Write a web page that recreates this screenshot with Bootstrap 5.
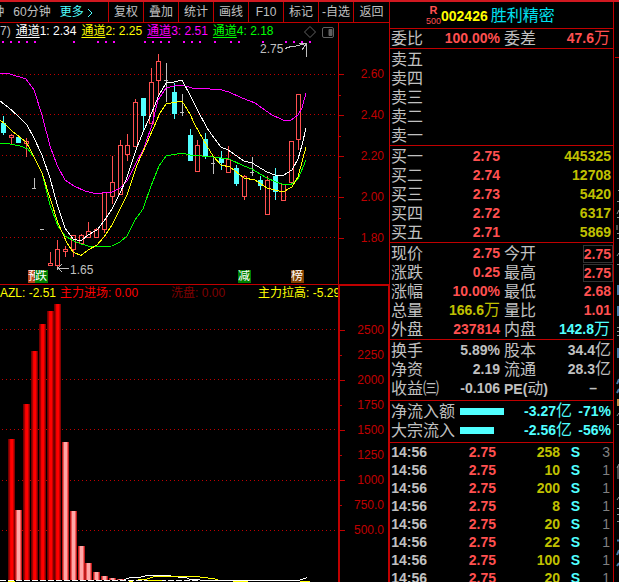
<!DOCTYPE html>
<html lang="zh-CN">
<head>
<meta charset="utf-8">
<meta name="viewport" content="width=device-width, initial-scale=1">
<title>002426 胜利精密</title>
<link href="https://cdn.jsdelivr.net/npm/bootstrap@5.3.0/dist/css/bootstrap.min.css" rel="stylesheet">
<style>
:root{--line:#c00000;--up:#ff5050;--dn:#50ffff;--tx:#c0c0c0;--vol:#c0c000}
body{background:#000;color:var(--tx);font:12px/16px "Liberation Sans","Noto Sans CJK SC",sans-serif}
.app{border-top:2px solid #d01820}
.toolbar{height:21px;border-bottom:1px solid var(--line)}
.toolbar button{background:none;border:0;padding:0;color:var(--tx);font-size:12px;line-height:16px;white-space:nowrap;flex:none}
.toolbar .periods{gap:9px;padding-right:14px}
.toolbar .tool{width:35px;border-left:1px solid var(--line)}
.toolbar .tool:last-child{width:36px}
.toolbar .more{color:var(--dn)}
.upper{height:261px}
.legend-row{height:17px;line-height:17px;white-space:nowrap;overflow:hidden}
.legend-row span{flex:none}
.legend-row u{text-underline-offset:2px}
.white{color:#fff}.yellow{color:#ff0}.magenta{color:#f0f}.green{color:#0f0}
.red{color:#f00}.maroon{color:#800000}.up{color:var(--up)}.dn{color:var(--dn)}.vol{color:var(--vol)}
.gap5{gap:5px}
.spaced{margin-left:33px}
.axis{width:51px;color:var(--line);border-left:1px solid var(--line);padding:41px 5px 0 0;margin:0;list-style:none}
.axis li{height:21px;line-height:21px;display:flex;justify-content:space-between;align-items:center}
.axis li::before{content:"";width:5px;height:1px;background:var(--line)}
.axis li.minor{height:20px}
.axis li.minor::before{width:2px}
.lower{border-top:1px solid var(--line)}
.lower .axis{border:2px solid var(--line);border-bottom:0;border-right-width:1px;margin-top:-1px;padding:32px 4px 0 0}
.lower .axis li{height:25px;line-height:25px}
.plot{min-width:0}
.flag{position:absolute;top:247px;width:13px;height:13px;line-height:13px;color:#fff;overflow:hidden;background:#008000}
.flag.brown{background:#804000}
.flag.part{width:7px;background:#b84818}
.note{position:absolute;line-height:14px}
.quote{width:225px;border-left:1px solid var(--line);border-right:1px solid var(--line);flex:none}
.stock{height:27px;padding:2px 0 0 36px;border-bottom:1px solid var(--line)}
.stock .tag{width:15px;line-height:11px;font-size:9px;color:var(--up)}
.stock .tag b{font-size:11px}
.stock .code{font-size:14px;font-weight:bold;margin-right:3px}
.stock h1{font-size:16px;font-weight:400;color:#00e0f0;margin:0}
.block{border-bottom:1px solid var(--line);padding:1px 0 0 1px}
.block.first{padding-top:0}
.block.roomy{padding:1px 0 2px 1px}
.quote table{width:100%;table-layout:fixed;border-collapse:collapse}
.quote th{font-weight:400;font-size:16px;line-height:19px;padding:0;white-space:nowrap;height:19px}
.quote td{font-weight:700;font-size:14px;line-height:19px;padding:0;text-align:right;white-space:nowrap;height:19px}
.quote td i{font-style:normal;font-weight:400;font-size:16px;line-height:16px}
.quote td.last{padding-right:2px}
.quote td.wan{padding-right:3px}
.latin{font-size:14px;font-weight:700;line-height:14px}
.c-name{width:36px}.c-val{width:73px}.c-name2{width:37px}
.c-flow{width:69px}.c-bar{width:45px}.c-amt{width:67px}.c-vol{width:64px}.c-side{width:20px}
.boxed{border:1px solid #333;padding:0 1px 0 0;display:inline-block;line-height:16px;height:18px}
.quote td.boxcell{line-height:18px}
.bar{height:7px;background:var(--dn)}
.ticks{padding-left:1px}
.ticks td{line-height:18px;height:18px}
.ticks td.cnt{font-weight:400;color:#808080;padding-right:3px}
.strip{width:5px;flex:none}
</style>
<script src="https://cdn.jsdelivr.net/npm/bootstrap@5.3.0/dist/js/bootstrap.bundle.min.js"></script>
</head>
<body>
<div class="app d-flex vh-100 overflow-hidden">
  <main class="d-flex flex-column flex-fill plot">
    <nav class="toolbar d-flex flex-shrink-0">
      <div class="periods d-flex flex-fill justify-content-end overflow-hidden plot">
        <button type="button">钟</button><button type="button">60分钟</button>
        <button type="button" class="more">更多 <svg width="7" height="10" viewBox="0 0 7 10"><path d="M1 1l4 4-4 4" fill="none" stroke="#50ffff"/></svg></button>
      </div>
      <button type="button" class="tool">复权</button><button type="button" class="tool">叠加</button><button type="button" class="tool">统计</button><button type="button" class="tool">画线</button><button type="button" class="tool">F10</button><button type="button" class="tool">标记</button><button type="button" class="tool">-自选</button><button type="button" class="tool">返回</button>
    </nav>

    <section class="upper d-flex flex-shrink-0">
      <div class="plot flex-fill d-flex flex-column position-relative">
        <div class="legend-row d-flex gap5 align-items-center">
          <span>7)</span>
          <span class="white"><u>通道</u>1: 2.34</span><span class="yellow"><u>通道</u>2: 2.25</span><span class="magenta"><u>通道</u>3: 2.51</span><span class="green"><u>通道</u>4: 2.18</span>
          <svg class="ms-auto me-1 flex-shrink-0" width="30" height="12" viewBox="0 0 30 12" fill="none" stroke="#606060"><path d="M6 .5L11.500 6 6 11.500 .5 6z"/><rect x="18.500" y="1.500" width="11" height="10" rx="1.500"/><path d="M25 3.500h3v6h-3z" fill="#606060"/></svg>
        </div>
        <svg class="w-100 flex-fill" height="244" viewBox="0 40 338 244" preserveAspectRatio="none" fill="none" shape-rendering="crispEdges">
          <path d="M2 74.500H338M2 114.500H338M2 155.500H338M2 196.500H338M2 237.500H338" stroke="#c00000" stroke-dasharray="1 3"/>
          <path d="M2 42h2m6 0h2m6 0h2m6 0h2m6 0h2m37 0h2m22 0h2m6 0h2m6 0h2m29 0h2m6 0h2m6 0h2m6 0h2m13 0h2m6 0h2m6 0h2m13 0h2m14 0h2m6 0h2m22 0h2m21 0h2m6 0h2m6 0h2m6 0h2" stroke="#f0f" stroke-width="2"/>
          <g stroke="#ff5050">
            <path d="M9.500 135.500h4v2h-4zM11.500 134v1M11.500 138v6M24.500 141.500h4v2h-4zM26.500 138v3M26.500 144v13M48.500 263.500h4v2h-4zM50.500 252v11M55.500 249.500h4v16h-4zM57.500 240v9M57.500 266v2M63.500 249.500h4v2h-4zM65.500 246v3M65.500 252v5M71.500 235.500h4v14h-4zM73.500 250v7M79.500 235.500h4v8h-4zM81.500 234v1M86.500 231.500h4v6h-4zM88.500 222v9M94.500 229.500h4v8h-4zM96.500 228v1M102.500 192.500h4v37h-4zM104.500 230v3M110.500 182.500h4v14h-4zM112.500 156v26M112.500 197v7M118.500 145.500h4v49h-4zM120.500 140v5M125.500 145.500h4v9h-4zM127.500 134v11M127.500 155v6M133.500 102.500h4v44h-4zM135.500 99v3"/>
            <path d="M149.500 82.500h4v41h-4zM151.500 68v14M156.500 61.500h4v19h-4zM158.500 54v7M158.500 81v15M195.500 145.500h4v26h-4zM197.500 140v5M226.500 159.500h4v13h-4zM228.500 146v13M242.500 176.500h4v20h-4zM244.500 175v1M244.500 197v3M265.500 180.500h4v34h-4zM267.500 176v4M281.500 184.500h4v16h-4zM289.500 141.500h4v41h-4zM296.500 94.500h4v45h-4zM298.500 140v10"/>
          </g>
          <path d="M1 123h5v10H1zM3 116h1v19H3zM16 137h5v6h-5zM141 98h5v18h-5zM143 98h1v33h-1zM172 92h5v22h-5zM174 83h1v36h-1zM188 135h5v26h-5zM190 129h1v32h-1zM203 139h5v18h-5zM205 133h1v26h-1zM219 158h5v5h-5zM221 151h1v19h-1zM234 168h5v16h-5zM236 165h1v21h-1zM258 180h5v6h-5zM260 176h1v14h-1zM273 176h5v16h-5zM275 168h1v32h-1z" fill="#50ffff"/>
          <path d="M166.500 63v39M164 80.500h4M182.500 94v22M180 112.500h4M34.500 178v10M32 188.500h4M40 229.500h4M213.500 157v17M211 163.500h4M252.500 157v19M250 172.500h4M306.500 43v14M303 43.500h4" stroke="#c0c0c0"/>
          <path d="M285 48.500l6-2h3l12-3M299 43.500h4M302 50l4-6M57 268.500h12M58 268l4-4M58 268l4 4M57 267v3" stroke="#c0c0c0"/>
          <polyline stroke="#f0f" points="0,73 10,74 26,79 34,90 42,115 50,146 57,165 65,180 74,186 85,191 97,194 104,192.500 112,192 120,188 127,181 135,165 144,148 152,125 158,100 166,88 174,86 182,85 192,88 200,88.500 220,89.500 229,92 242,98 255,103 262,108 272,115 280,118.500 284,120.500 291,120 298,115 302,108 306,93"/>
          <polyline stroke="#0f0" points="0,143.500 10,144 20,146 28,149 34,157 42,173 50,205 58,226 65,236 74,241 81,244 90,246.500 112,246 120,242 127,236 135,220 143,209 151,186 159,166 166,156 182,153 190,155 213,157 229,159 244,166 252,169 260,174 267,178 276,182 283,184.500 291,184.500 298,179 306,160"/>
          <polyline stroke="#ff0" points="0,120 5,124 12,131 26,142 30,149 42,173 50,198 58,223 67,243 73,252 81,255.500 88,250 97,245 104,237 112,225 127,195 137,165 146,145 153,129 160,113 166,104 174,102.500 182,101 190,114 195,125 207,146 213,156 221,165 230,167 244,178 255,180 267,188 283,192 292,187 298,177 306,147"/>
          <polyline stroke="#fff" points="0,101 8,107 18,116 27,125 34,138 42,155 50,178 57,204 65,228 73,239 81,241 88,235 97,230 104,221 112,209 120,193 126,180 131,165 137,147 144,130 152,112 159,95 166,83 174,82 182,80 190,95 198,111 207,128 214,138 221,147 228,150 244,161 252,163 267,172 275,175 283,175.500 292,170 298,159 302,145 306,128"/>
        </svg>
        <span class="note" style="left:260px;top:19px">2.75</span>
        <span class="note" style="left:70px;top:240px">1.65</span>
        <span class="flag part" style="left:28px">预</span><span class="flag" style="left:35px">跌</span><span class="flag" style="left:238px">减</span><span class="flag brown" style="left:291px">榜</span>
      </div>
      <ul class="axis flex-shrink-0">
        <li>2.60</li><li class="minor"></li><li>2.40</li><li class="minor"></li><li>2.20</li><li class="minor"></li><li>2.00</li><li class="minor"></li><li>1.80</li>
      </ul>
    </section>

    <section class="lower d-flex flex-fill overflow-hidden">
      <div class="plot flex-fill d-flex flex-column">
        <div class="legend-row d-flex">
          <span class="yellow">AZL: -2.51</span><span class="red ms-1">主力进场: 0.00</span><span class="maroon spaced">洗盘: 0.00</span><span class="yellow spaced">主力拉高: -5.29</span>
        </div>
        <svg class="w-100 flex-fill" height="200" viewBox="0 302 338 280" preserveAspectRatio="none" fill="none" shape-rendering="crispEdges">
          <defs>
            <linearGradient id="hot"><stop offset="0" stop-color="#700000"/><stop offset=".14" stop-color="#700000"/><stop offset=".3" stop-color="#e00000"/><stop offset=".42" stop-color="#f00"/><stop offset=".65" stop-color="#f00"/><stop offset=".84" stop-color="#b00000"/><stop offset="1" stop-color="#600000"/></linearGradient>
            <linearGradient id="soft"><stop offset="0" stop-color="#a00000"/><stop offset=".14" stop-color="#e03030"/><stop offset=".36" stop-color="#ffa8a8"/><stop offset=".65" stop-color="#ffa8a8"/><stop offset=".84" stop-color="#f04040"/><stop offset="1" stop-color="#900000"/></linearGradient>
          </defs>
          <path d="M2 329.500H338M2 379.500H338M2 429.500H338M2 480.500H338M2 530.500H338" stroke="#c00000" stroke-dasharray="1 3"/>
          <g fill="url(#hot)"><rect x="8" y="439" width="7" height="141"/><rect x="23" y="404" width="7" height="176"/><rect x="31" y="351" width="7" height="229"/><rect x="39" y="324" width="7" height="256"/><rect x="47" y="311" width="7" height="269"/><rect x="54" y="304" width="7" height="276"/></g>
          <g fill="url(#soft)"><rect x="15" y="510" width="7" height="70"/><rect x="62" y="442" width="7" height="138"/><rect x="70" y="511" width="7" height="69"/><rect x="78" y="546" width="7" height="34"/><rect x="85" y="563" width="7" height="17"/><rect x="93" y="572" width="7" height="8"/><rect x="101" y="576" width="7" height="4"/><rect x="109" y="578" width="7" height="2"/><rect x="117" y="579" width="7" height="1"/></g>
          <path d="M0 580.500H300" stroke="#fff" stroke-dasharray="6 2"/>
          <path d="M124 579.500l7-2h8l8-2h24M178 577.500h8l4 2h10M190 579.500l20 1h88l4-1 5-2" stroke="#fff"/>
          <path d="M138 579.500h7l10-3h40l10 1 13 2M233 581.500h15M300 581h10M148 580.500h14M8 581.500h7M129 581.500h4" stroke="#ff0"/>
        </svg>
      </div>
      <ul class="axis flex-shrink-0">
        <li>2500</li><li class="minor">2250</li><li>2000</li><li class="minor">1750</li><li>1500</li><li class="minor">1250</li><li>1000</li><li class="minor">750.0</li><li>500.0</li>
      </ul>
    </section>
  </main>

  <aside class="quote">
    <header class="stock d-flex align-items-center">
      <div class="tag d-flex flex-column align-items-center"><b>R</b><span>500</span></div>
      <span class="code yellow">002426</span><h1>胜利精密</h1>
    </header>
    <div class="block first"><table><colgroup><col class="c-name"><col class="c-val"><col class="c-name2"><col></colgroup>
      <tr><th>委比</th><td class="up">100.00%</td><th class="ps-1">委差</th><td class="up wan">47.6<i>万</i></td></tr></table></div>
    <div class="block"><table>
      <tr><th>卖五</th></tr><tr><th>卖四</th></tr><tr><th>卖三</th></tr><tr><th>卖二</th></tr><tr><th>卖一</th></tr></table></div>
    <div class="block"><table><colgroup><col class="c-name"><col class="c-val"><col></colgroup>
      <tr><th>买一</th><td class="up">2.75</td><td class="vol last">445325</td></tr>
      <tr><th>买二</th><td class="up">2.74</td><td class="vol last">12708</td></tr>
      <tr><th>买三</th><td class="up">2.73</td><td class="vol last">5420</td></tr>
      <tr><th>买四</th><td class="up">2.72</td><td class="vol last">6317</td></tr>
      <tr><th>买五</th><td class="up">2.71</td><td class="vol last">5869</td></tr></table></div>
    <div class="block"><table><colgroup><col class="c-name"><col class="c-val"><col class="c-name2"><col></colgroup>
      <tr><th>现价</th><td class="up">2.75</td><th class="ps-1">今开</th><td class="up boxcell"><span class="boxed">2.75</span></td></tr>
      <tr><th>涨跌</th><td class="up">0.25</td><th class="ps-1">最高</th><td class="up boxcell"><span class="boxed">2.75</span></td></tr>
      <tr><th>涨幅</th><td class="up">10.00%</td><th class="ps-1">最低</th><td class="up last">2.68</td></tr>
      <tr><th>总量</th><td class="vol">166.6<i>万</i></td><th class="ps-1">量比</th><td class="up last">1.01</td></tr>
      <tr><th>外盘</th><td class="up">237814</td><th class="ps-1">内盘</th><td class="dn wan">142.8<i>万</i></td></tr></table></div>
    <div class="block roomy"><table><colgroup><col class="c-name"><col class="c-val"><col class="c-name2"><col></colgroup>
      <tr><th>换手</th><td>5.89%</td><th class="ps-1">股本</th><td class="last">34.4<i>亿</i></td></tr>
      <tr><th>净资</th><td>2.19</td><th class="ps-1">流通</th><td class="last">28.3<i>亿</i></td></tr>
      <tr><th>收益㈢</th><td>-0.106</td><th class="ps-1"><span class="latin">PE(</span>动<span class="latin">)</span></th><td class="pe-3">–</td></tr></table></div>
    <div class="block roomy"><table><colgroup><col class="c-flow"><col class="c-bar"><col class="c-amt"><col></colgroup>
      <tr><th>净流入额</th><td><div class="bar" style="width:98%"></div></td><td class="dn">-3.27<i>亿</i></td><td class="dn last">-71%</td></tr>
      <tr><th>大宗流入</th><td><div class="bar" style="width:76%"></div></td><td class="dn">-2.56<i>亿</i></td><td class="dn last">-56%</td></tr></table></div>
    <div class="ticks"><table><colgroup><col class="c-name"><col class="c-flow"><col class="c-vol"><col class="c-side"><col></colgroup>
      <tr><td>14:56</td><td class="up">2.75</td><td class="vol">258</td><td class="dn">S</td><td class="cnt">3</td></tr>
      <tr><td>14:56</td><td class="up">2.75</td><td class="vol">10</td><td class="dn">S</td><td class="cnt">1</td></tr>
      <tr><td>14:56</td><td class="up">2.75</td><td class="vol">200</td><td class="dn">S</td><td class="cnt">1</td></tr>
      <tr><td>14:56</td><td class="up">2.75</td><td class="vol">8</td><td class="dn">S</td><td class="cnt">1</td></tr>
      <tr><td>14:56</td><td class="up">2.75</td><td class="vol">20</td><td class="dn">S</td><td class="cnt">1</td></tr>
      <tr><td>14:56</td><td class="up">2.75</td><td class="vol">22</td><td class="dn">S</td><td class="cnt">1</td></tr>
      <tr><td>14:56</td><td class="up">2.75</td><td class="vol">100</td><td class="dn">S</td><td class="cnt">1</td></tr>
      <tr><td>14:56</td><td class="up">2.75</td><td class="vol">20</td><td class="dn">S</td><td class="cnt">1</td></tr></table></div>
  </aside>
  <svg class="strip h-100" width="5" viewBox="614 2 5 580" preserveAspectRatio="xMinYMin slice" fill="none">
    <path d="M615 57.500h4" stroke="#c00000"/>
    <path d="M618 190.500h1M617 201.500h2M619 210l-2 4M617 217.500h2M617 225v5M617 233.500h2M617 238.500h2M619 253l-2 3M617 264.500h2M617 327.500h2M617 331.500h2M617 335.500h2M617 416l2-3M617 424.500h2M619 464l-2 4M618 466v13M619 497l-2 3M617 508.500h2M617 514.500h2M617 521.500h2" stroke="#909090"/>
    <path d="M618 285v10M618 306v10M618 348v10M617 384l2-5M617 393l2-4M617 540.500h2M617 555l2-5M617 566l2-3" stroke="#4878a8" stroke-width="2"/>
    <path d="M618 399v7" stroke="#c08840" stroke-width="2"/>
  </svg>
</div>
</body>
</html>
